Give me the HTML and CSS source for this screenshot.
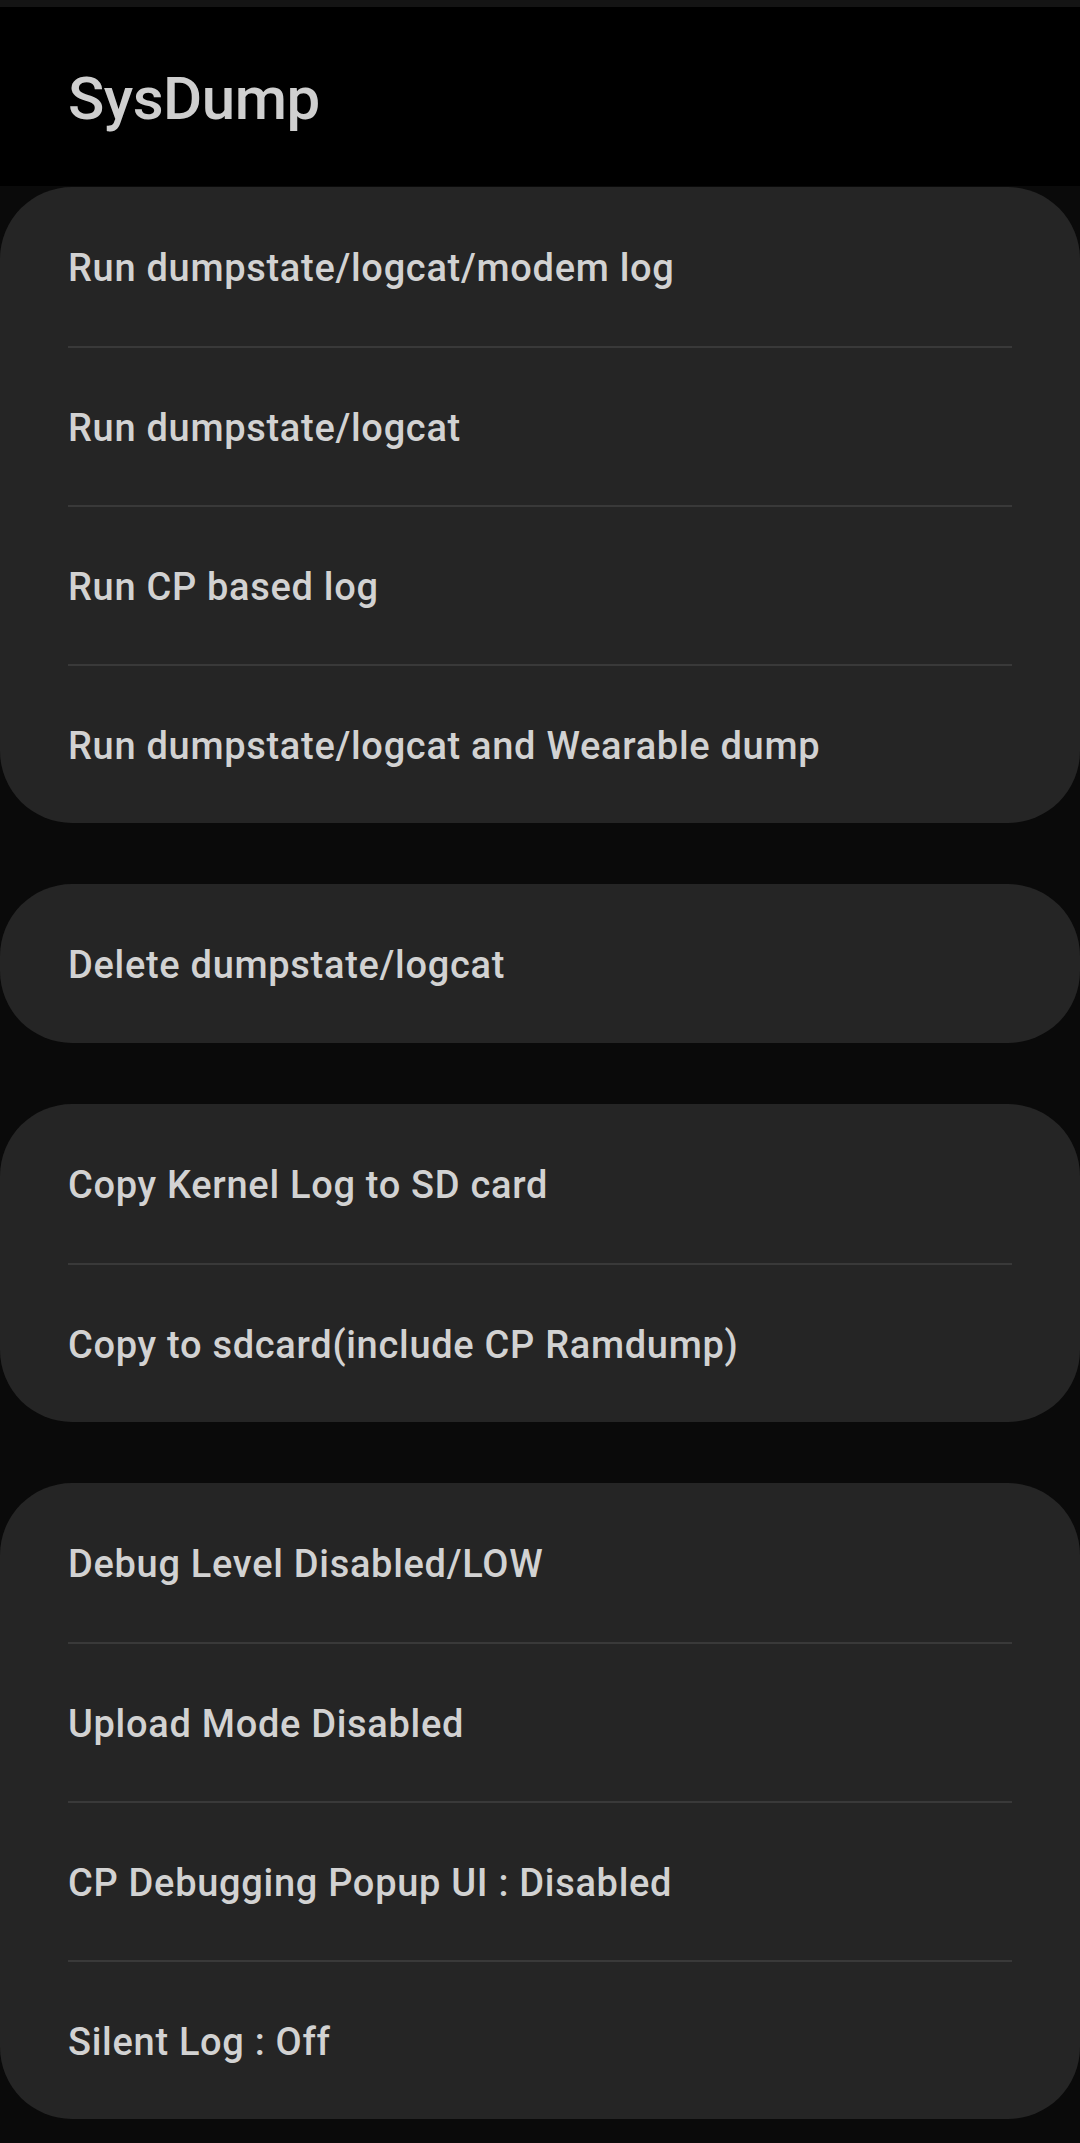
FILE: index.html
```html
<!DOCTYPE html>
<html lang="en">
<head>
<meta charset="utf-8">
<title>SysDump</title>
<link rel="stylesheet" href="styles.css">
</head>
<body>
<div class="statusbar"></div>
<header class="appbar">
  <h1 class="title">SysDump</h1>
</header>
<main class="list">
  <section class="card">
    <div class="row">Run dumpstate/logcat/modem log</div>
    <div class="row">Run dumpstate/logcat</div>
    <div class="row">Run CP based log</div>
    <div class="row">Run dumpstate/logcat and Wearable dump</div>
  </section>
  <section class="card">
    <div class="row">Delete dumpstate/logcat</div>
  </section>
  <section class="card">
    <div class="row">Copy Kernel Log to SD card</div>
    <div class="row">Copy to sdcard(include CP Ramdump)</div>
  </section>
  <section class="card">
    <div class="row">Debug Level Disabled/LOW</div>
    <div class="row">Upload Mode Disabled</div>
    <div class="row">CP Debugging Popup UI : Disabled</div>
    <div class="row">Silent Log : Off</div>
  </section>
</main>
</body>
</html>
```
FILE: styles.css
```css
html, body {
  margin: 0;
  padding: 0;
}
body {
  width: 1080px;
  min-height: 2143px;
  background: #0a0a0a;
  font-family: Roboto, "Noto Sans", "Liberation Sans", sans-serif;
  color: #d2d2d2;
}
.statusbar {
  height: 7px;
  background: #141414;
}
.appbar {
  height: 179px;
  background: #000;
  box-sizing: border-box;
  padding: 52px 0 0 68px;
}
.title {
  margin: 0;
  font-size: 60px;
  font-weight: 500;
  line-height: 80px;
  color: #cfcfcf;
  letter-spacing: -0.5px;
}
.list {
  display: flex;
  flex-direction: column;
  gap: 61px;
  padding-top: 1px;
}
.card {
  background: #252525;
  border-radius: 72px;
}
.row {
  margin: 0 68px;
  height: 159px;
  box-sizing: border-box;
  display: flex;
  align-items: center;
  padding-top: 3px;
  font-size: 38px;
  font-weight: 500;
  letter-spacing: 0.7px;
  white-space: nowrap;
}
.row + .row {
  border-top: 2px solid #393939;
}
```
